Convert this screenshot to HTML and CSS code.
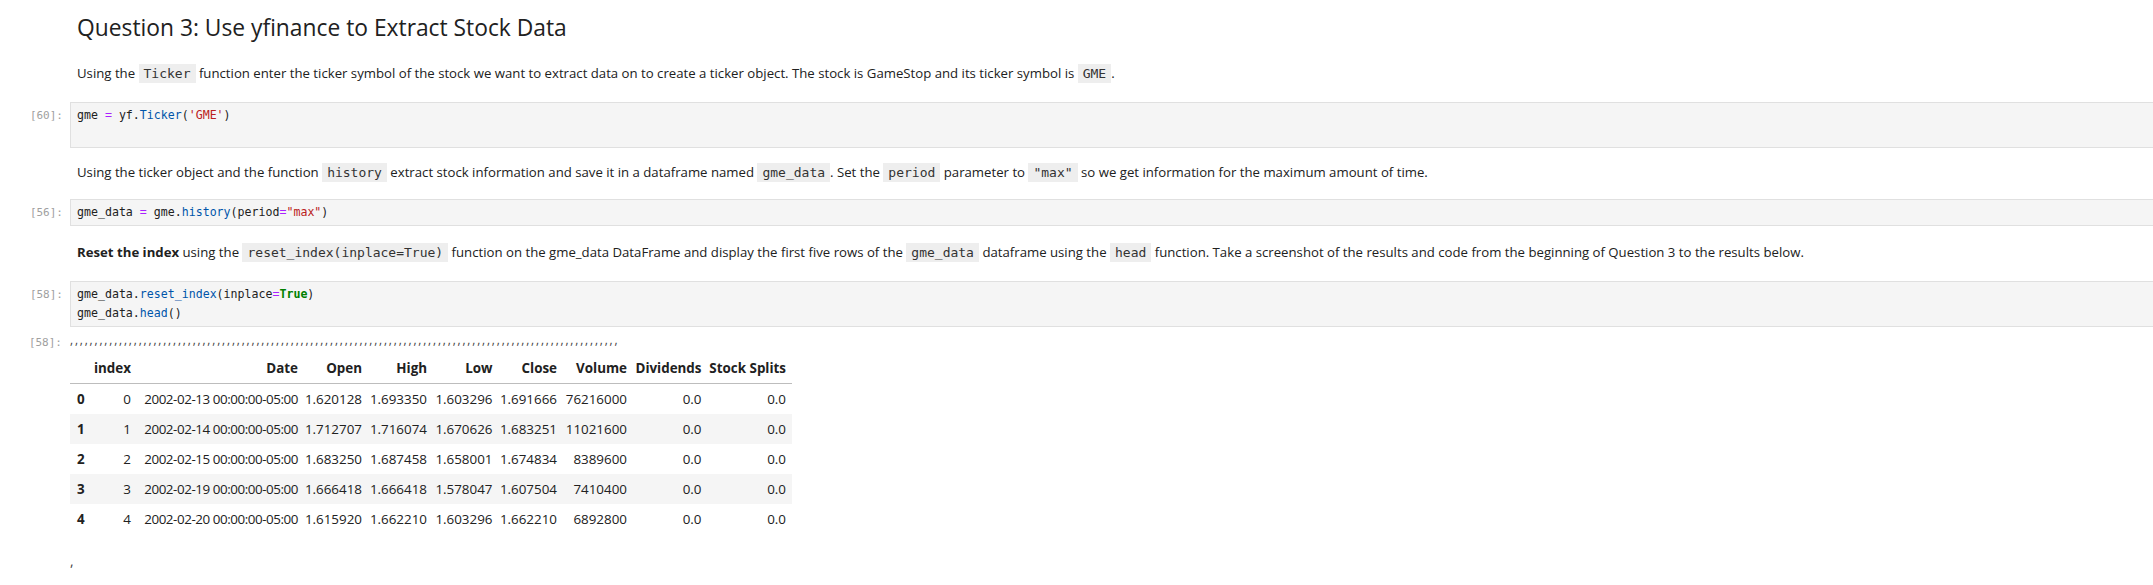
FILE: index.html
```html
<!DOCTYPE html>
<html>
<head>
<meta charset="utf-8">
<link rel="stylesheet" href="styles.css">
</head>
<body>
<div class="nb">
  <div class="cell heading-cell">
    <div class="prompt"></div>
    <div class="md"><h2 class="h2">Question 3: Use yfinance to Extract Stock Data</h2></div>
  </div>

  <div class="cell p1">
    <div class="prompt"></div>
    <div class="md"><p class="para">Using the <code class="ic">Ticker</code> function enter the ticker symbol of the stock we want to extract data on to create a ticker object. The stock is GameStop and its ticker symbol is <code class="ic">GME</code>.</p></div>
  </div>

  <div class="cell code1">
    <div class="prompt">[60]:</div>
    <div class="input">
      <div class="src">
        <div class="ln">gme <span class="op">=</span> yf.<span class="fn">Ticker</span>(<span class="str">'GME'</span>)</div>
        <div class="ln"></div>
      </div>
    </div>
  </div>

  <div class="cell p2">
    <div class="prompt"></div>
    <div class="md"><p class="para">Using the ticker object and the function <code class="ic">history</code> extract stock information and save it in a dataframe named <code class="ic">gme_data</code>. Set the <code class="ic">period</code> parameter to <code class="ic">"max"</code> so we get information for the maximum amount of time.</p></div>
  </div>

  <div class="cell code2">
    <div class="prompt">[56]:</div>
    <div class="input">
      <div class="src">
        <div class="ln">gme_data <span class="op">=</span> gme.<span class="fn">history</span>(period<span class="op">=</span><span class="str">"max"</span>)</div>
      </div>
    </div>
  </div>

  <div class="cell p3">
    <div class="prompt"></div>
    <div class="md"><p class="para"><b>Reset the index</b> using the <code class="ic">reset_index(inplace=True)</code> function on the gme_data DataFrame and display the first five rows of the <code class="ic">gme_data</code> dataframe using the <code class="ic">head</code> function. Take a screenshot of the results and code from the beginning of Question 3 to the results below.</p></div>
  </div>

  <div class="cell code3">
    <div class="prompt">[58]:</div>
    <div class="input">
      <div class="src">
        <div class="ln">gme_data.<span class="fn">reset_index</span>(inplace<span class="op">=</span><span class="kw">True</span>)</div>
        <div class="ln">gme_data.<span class="fn">head</span>()</div>
      </div>
    </div>
  </div>

  <div class="cell out-row">
    <div class="prompt">[58]:</div>
    <div class="commas">,,,,,,,,,,,,,,,,,,,,,,,,,,,,,,,,,,,,,,,,,,,,,,,,,,,,,,,,,,,,,,,,,,,,,,,,,,,,,,,,,,,,,,,,,,,,,,,,,,,,,,,,,,,,,,,,</div>
  </div>

  <div class="cell out-table">
    <div class="prompt"></div>
    <div class="output">
      <table class="df">
        <colgroup>
          <col class="c0"><col class="c1"><col class="c2"><col class="c3"><col class="c4"><col class="c5"><col class="c6"><col class="c7"><col class="c8"><col class="c9">
        </colgroup>
        <thead>
          <tr><th class="rl"></th><th>index</th><th>Date</th><th>Open</th><th>High</th><th>Low</th><th>Close</th><th>Volume</th><th>Dividends</th><th>Stock Splits</th></tr>
        </thead>
        <tbody>
          <tr><th class="rl">0</th><td>0</td><td class="dt">2002-02-13 00:00:00-05:00</td><td>1.620128</td><td>1.693350</td><td>1.603296</td><td>1.691666</td><td>76216000</td><td>0.0</td><td>0.0</td></tr>
          <tr><th class="rl">1</th><td>1</td><td class="dt">2002-02-14 00:00:00-05:00</td><td>1.712707</td><td>1.716074</td><td>1.670626</td><td>1.683251</td><td>11021600</td><td>0.0</td><td>0.0</td></tr>
          <tr><th class="rl">2</th><td>2</td><td class="dt">2002-02-15 00:00:00-05:00</td><td>1.683250</td><td>1.687458</td><td>1.658001</td><td>1.674834</td><td>8389600</td><td>0.0</td><td>0.0</td></tr>
          <tr><th class="rl">3</th><td>3</td><td class="dt">2002-02-19 00:00:00-05:00</td><td>1.666418</td><td>1.666418</td><td>1.578047</td><td>1.607504</td><td>7410400</td><td>0.0</td><td>0.0</td></tr>
          <tr><th class="rl">4</th><td>4</td><td class="dt">2002-02-20 00:00:00-05:00</td><td>1.615920</td><td>1.662210</td><td>1.603296</td><td>1.662210</td><td>6892800</td><td>0.0</td><td>0.0</td></tr>
        </tbody>
      </table>
    </div>
  </div>

  <div class="cell trail">
    <div class="prompt"></div>
    <div class="md"><span class="tc">,</span></div>
  </div>
</div>
</body>
</html>
```

FILE: styles.css
```css
html, body {
  margin: 0;
  padding: 0;
  background: #ffffff;
  overflow: hidden;
}

body {
  font-family: "Open Sans", "Liberation Sans", sans-serif;
  color: #212121;
  font-size: 14px;
}

.nb {
  display: flex;
  flex-direction: column;
  width: 2153px;
}

.cell {
  display: flex;
  flex-direction: row;
  align-items: flex-start;
}

.prompt {
  flex: 0 0 70px;
  width: 70px;
  box-sizing: border-box;
  padding-right: 7px;
  text-align: right;
  font-family: "DejaVu Sans Mono", "Liberation Mono", monospace;
  font-size: 11px;
  color: #a0a0a0;
  line-height: 19px;
}

.md {
  flex: 1 1 auto;
  padding-left: 7px;
}

.h2 {
  margin: 0;
  font-size: 22.8px;
  font-weight: 400;
  line-height: 32px;
  color: #212121;
}

.para {
  margin: 0;
  line-height: 20px;
  font-size: 13.2px;
  white-space: nowrap;
}

.ic {
  display: inline-block;
  font-family: "DejaVu Sans Mono", "Liberation Mono", monospace;
  font-size: 13px;
  line-height: 19px;
  padding: 0 5px;
  background: #eeeeee;
  color: #333333;
  vertical-align: middle;
  margin-top: -2px;
}

.input {
  flex: 1 1 auto;
  background: #f5f5f5;
  border: 1px solid #e0e0e0;
  border-right: none;
  padding: 3px 6px;
}

.src {
  font-family: "DejaVu Sans Mono", "Liberation Mono", monospace;
  font-size: 11.6px;
  line-height: 19px;
  color: #212121;
}

.ln {
  height: 19px;
  white-space: pre;
}

.op { color: #aa22ff; }
.fn { color: #0055aa; }
.str { color: #ba2121; }
.kw { color: #008000; font-weight: bold; }

.heading-cell { margin-top: 12px; }
.p1 { margin-top: 19px; }
.code1 { margin-top: 19px; }
.code1 .prompt { padding-top: 4px; }
.p2 { margin-top: 14px; }
.code2 { margin-top: 17px; }
.code2 .prompt { padding-top: 4px; }
.p3 { margin-top: 16px; }
.code3 { margin-top: 19px; }
.code3 .prompt { padding-top: 4px; }

.out-row {
  margin-top: 5px;
  height: 20px;
  align-items: center;
}

.out-row .prompt { padding-right: 8px; }

.commas {
  font-family: "Open Sans", sans-serif;
  font-size: 12px;
  letter-spacing: 1.8px;
  color: #444444;
  line-height: 20px;
  margin-top: -4px;
}

.out-table { margin-top: 2px; }

.output { flex: 0 0 auto; }

.df {
  border-collapse: collapse;
  table-layout: fixed;
  width: 722px;
  font-size: 13.4px;
  color: #212121;
}

.c0 { width: 22px; }
.c1 { width: 45px; }
.c2 { width: 167px; }
.c3 { width: 64px; }
.c4 { width: 65px; }
.c5 { width: 65.5px; }
.c6 { width: 64.5px; }
.c7 { width: 70px; }
.c8 { width: 74.5px; }
.c9 { width: 84.5px; }

.df th, .df td {
  padding: 0 6px 0 0;
  text-align: right;
  white-space: nowrap;
  overflow: visible;
  height: 30px;
  line-height: 30px;
}

.df td.dt { letter-spacing: -0.44px; }

.df thead th {
  font-weight: 700;
  height: 29px;
  line-height: 29px;
  border-bottom: 1px solid #bdbdbd;
}

.df th.rl {
  text-align: left;
  padding: 0 0 0 7px;
  font-weight: 700;
}

.df tbody tr:nth-child(even) { background: #f5f5f5; }

.trail { margin-top: 17px; }
.trail .md { padding-left: 0; line-height: 20px; }
.tc { color: #444444; }
```
